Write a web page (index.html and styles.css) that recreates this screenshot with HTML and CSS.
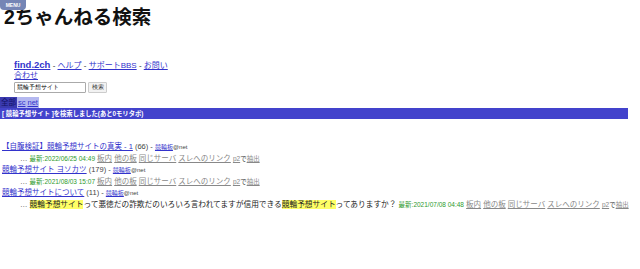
FILE: index.html
```html
<!DOCTYPE html>
<html lang="ja">
<head>
    <meta charset="UTF-8">
    <title>2ちゃんねる検索</title>
    <link rel="stylesheet" href="styles.css">
</head>
<body>

<div class="menu">MENU</div>

<h1 class="title">2ちゃんねる検索</h1>

<div class="head">
    <div class="nav">
        <a href="#" class="home">find.2ch</a> - <a href="#">ヘルプ</a> - <a href="#">サポートBBS</a> - <a href="#">お問い合わせ</a>
    </div>
    <form class="search">
        <input type="text" value="競輪予想サイト">
        <button type="button">検索</button>
    </form>
</div>

<div class="tabs">
    <span class="tab on">全部</span><a href="#" class="tab">sc</a><a href="#" class="tab">net</a>
</div>
<div class="bar">[ 競輪予想サイト ]を検索しました(あと0モリタポ)</div>

<div class="results">
    <div class="item">
        <a href="#" class="t">【自腹検証】競輪予想サイトの真実 - 1</a> (66) - <a href="#" class="board">競輪板</a><span class="srv">@net</span>
        <div class="meta">
            … <span class="date">最新:2022/06/25 04:49</span>
            <a href="#">板内</a> <a href="#">他の板</a> <a href="#">同じサーバ</a> <a href="#">スレへのリンク</a>
            <span class="p2"><a href="#">p2</a>で<a href="#">抽出</a></span>
        </div>
    </div>
    <div class="item">
        <a href="#" class="t">競輪予想サイト ヨソカツ</a> (179) - <a href="#" class="board">競輪板</a><span class="srv">@net</span>
        <div class="meta">
            … <span class="date">最新:2021/08/03 15:07</span>
            <a href="#">板内</a> <a href="#">他の板</a> <a href="#">同じサーバ</a> <a href="#">スレへのリンク</a>
            <span class="p2"><a href="#">p2</a>で<a href="#">抽出</a></span>
        </div>
    </div>
    <div class="item">
        <a href="#" class="t">競輪予想サイトについて</a> (11) - <a href="#" class="board">競輪板</a><span class="srv">@net</span>
        <div class="meta">
            … <span class="snip"><em>競輪予想サイト</em>って悪徳だの詐欺だのいろいろ言われてますが信用できる<em>競輪予想サイト</em>ってありますか？</span>
            <span class="date">最新:2021/07/08 04:48</span>
            <a href="#">板内</a> <a href="#">他の板</a> <a href="#">同じサーバ</a> <a href="#">スレへのリンク</a>
            <span class="p2"><a href="#">p2</a>で<a href="#">抽出</a></span>
        </div>
    </div>
</div>

</body>
</html>
```

FILE: styles.css
```css
body {
    font-family: "Liberation Sans", "Noto Sans CJK JP", sans-serif;
    margin: 0;
    color: #222;
    background: #fff;
}
a {
    color: #3333cc;
}
.menu {
    position: absolute;
    left: 0;
    top: 0;
    width: 26px;
    height: 10px;
    line-height: 10px;
    font-size: 5px;
    font-weight: bold;
    text-align: center;
    color: #fff;
    background: #7585b5;
    border-radius: 0 0 4px 4px;
}
.title {
    font-size: 19.5px;
    font-weight: bold;
    margin: 4px 0 0 4px;
    line-height: 26px;
    color: #111;
}
.head {
    margin: 30px 0 0 14px;
    width: 155px;
}
.nav {
    font-size: 8px;
    line-height: 10px;
}
.nav .home {
    font-size: 9.5px;
    font-weight: bold;
}
.search {
    margin: 1px 0 0;
    display: flex;
    gap: 2px;
}
.search input {
    width: 72px;
    height: 11px;
    box-sizing: border-box;
    font-size: 5.5px;
    padding: 0 2px;
    border: 1px solid #aaa;
    border-radius: 1px;
    margin: 0;
}
.search button {
    height: 11px;
    width: 19px;
    padding: 0;
    font-size: 5.5px;
    border: 1px solid #ccc;
    background: #f2f2f2;
    border-radius: 1px;
    color: #333;
}
.tabs {
    margin-top: 4px;
    font-size: 7.5px;
    line-height: 11px;
    display: flex;
}
.tab {
    display: block;
    padding: 0 1px;
    background: #b4b8f0;
}
.tab.on {
    background: #3a3ab0;
    color: #111166;
}
.bar {
    background: #4343cc;
    color: #fff;
    font-size: 6.3px;
    font-weight: bold;
    line-height: 11px;
    padding: 0 2px;
    margin-right: 12px;
}
.results {
    margin-top: 22px;
    padding-left: 2px;
    font-size: 7.5px;
    line-height: 11px;
    color: #444;
}
.srv {
    font-size: 6px;
}
.board {
    font-size: 6px;
}
.meta {
    padding-left: 18px;
    color: #444;
}
.meta a {
    color: #888;
}
.meta .date {
    color: #2e9a2e;
    font-size: 6.5px;
}
.meta .p2 {
    font-size: 6.5px;
}
.snip {
    color: #222;
    font-size: 7.7px;
}
.snip em {
    font-style: normal;
    background: #ffff66;
}
```
